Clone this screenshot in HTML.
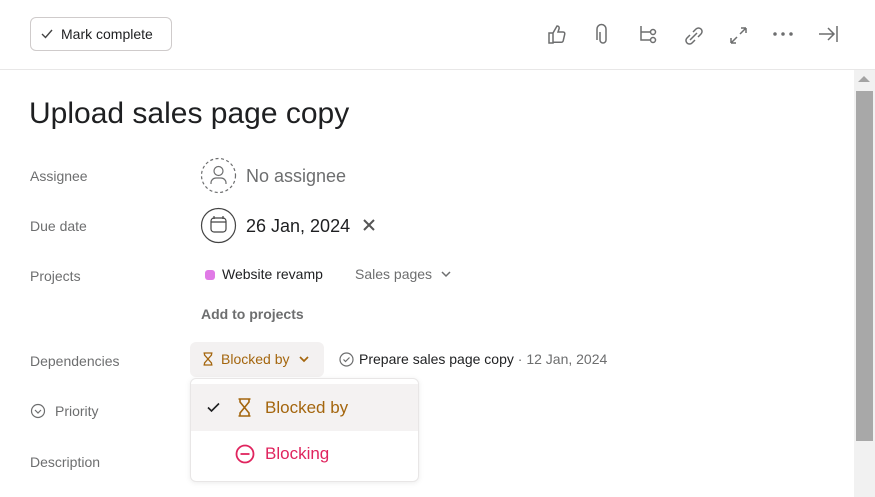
<!DOCTYPE html><html><head><style>
body{margin:0;width:875px;height:497px;overflow:hidden;background:#fff;font-family:"Liberation Sans",sans-serif;position:relative;color:#1e1f21}
.a{position:absolute}
.lbl{position:absolute;left:30px;font-size:14px;color:#6d6e6f}
svg{position:absolute}
</style></head><body>
<div class="a" style="left:30px;top:17px;width:142px;height:34px;border:1px solid #cfcbcb;border-radius:6px;box-sizing:border-box"></div>
<svg style="left:40px;top:28px" width="14" height="12" viewBox="0 0 14 12"><path d="M2 6l3.5 3.5L12 2" fill="none" stroke="#444" stroke-width="1.4"/></svg>
<div class="a" style="left:61px;top:26px;font-size:14px;color:#1e1f21">Mark complete</div>
<svg style="left:540px;top:20px" width="310" height="30" viewBox="0 0 310 30" fill="none" stroke="#6d6e6f" stroke-width="1.5">
<path d="M9 13h4v10H9zM13 13l4-7c2 0 2.5 1.5 2 3l-1 3h5c1.5 0 2 1 1.7 2.3l-1.5 6.5c-.3 1-1 1.5-2 1.5H13"/>
<path d="M60 12v8a3 3 0 0 0 6 0V9a4.5 4.5 0 0 0-9 0v11"/>
<path d="M101 6v14h9M101 12h9"/><circle cx="113" cy="12" r="2.5"/><circle cx="113" cy="20" r="2.5"/>
<path d="M150 15l-3 3a3.5 3.5 0 0 0 5 5l3-3M158 17l3-3a3.5 3.5 0 0 0-5-5l-3 3M150 20l7-7"/>
<path d="M191 23l6-6M191 23v-5M191 23h5M206 8l-6 6M206 8h-5M206 8v5"/>
<circle cx="235" cy="14" r="1" fill="#6d6e6f"/><circle cx="243" cy="14" r="1" fill="#6d6e6f"/><circle cx="251" cy="14" r="1" fill="#6d6e6f"/>
<path d="M279 14h15M288 8l6 6-6 6M297 6v16"/>
</svg>
<div class="a" style="left:0;top:69px;width:875px;height:1px;background:#e8e7e7"></div>
<div class="a" style="left:854px;top:70px;width:21px;height:427px;background:#f1f1f1"></div>
<div class="a" style="left:856px;top:91px;width:17px;height:350px;background:#a8a8a8"></div>
<div class="a" style="left:858px;top:76px;width:0;height:0;border-left:6px solid transparent;border-right:6px solid transparent;border-bottom:6px solid #a3a3a3"></div>
<div class="a" style="left:29px;top:97px;font-size:30px;color:#1e1f21">Upload sales page copy</div>
<div class="lbl" style="top:168px">Assignee</div>
<div class="lbl" style="top:218px">Due date</div>
<div class="lbl" style="top:268px">Projects</div>
<div class="lbl" style="top:353px">Dependencies</div>
<div class="lbl" style="top:403px;left:55px">Priority</div>
<svg style="left:30px;top:403px" width="16" height="16" viewBox="0 0 16 16" fill="none" stroke="#6d6e6f" stroke-width="1.2"><circle cx="8" cy="8" r="6.5"/><path d="M5 7l3 3 3-3"/></svg>
<div class="lbl" style="top:454px">Description</div>
<svg style="left:200px;top:157px" width="37" height="37" viewBox="0 0 37 37" fill="none" stroke="#6d6e6f" stroke-width="1.2"><circle cx="18.5" cy="18.5" r="17" stroke-dasharray="3 2.5"/><circle cx="18.5" cy="14" r="4.5"/><path d="M11 27v-1a5 5 0 0 1 5-5h5a5 5 0 0 1 5 5v1"/></svg>
<div class="a" style="left:246px;top:166px;font-size:18px;color:#6d6e6f">No assignee</div>
<svg style="left:200px;top:207px" width="37" height="37" viewBox="0 0 37 37" fill="none" stroke="#444" stroke-width="1.2"><circle cx="18.5" cy="18.5" r="17"/><rect x="11" y="11" width="15" height="14" rx="3"/><path d="M11 15h15M14 9v3M23 9v3"/></svg>
<div class="a" style="left:246px;top:216px;font-size:18px;color:#1e1f21">26 Jan, 2024</div>
<svg style="left:362px;top:218px" width="14" height="14" viewBox="0 0 14 14" stroke="#555" stroke-width="2"><path d="M2 2l10 10M12 2L2 12"/></svg>
<div class="a" style="left:205px;top:270px;width:10px;height:10px;border-radius:3px;background:#e07ae6"></div>
<div class="a" style="left:222px;top:266px;font-size:14px;color:#1e1f21">Website revamp</div>
<div class="a" style="left:355px;top:266px;font-size:14px;color:#6d6e6f">Sales pages</div>
<svg style="left:440px;top:268px" width="12" height="12" viewBox="0 0 12 12" fill="none" stroke="#6d6e6f" stroke-width="1.5"><path d="M2 4l4 4 4-4"/></svg>
<div class="a" style="left:201px;top:306px;font-size:14px;font-weight:bold;color:#6d6e6f">Add to projects</div>
<div class="a" style="left:190px;top:342px;width:134px;height:35px;border-radius:6px;background:#f3f1f1"></div>
<svg style="left:202px;top:352px" width="12" height="14" viewBox="0 0 12 14" fill="none" stroke="#a4660e" stroke-width="1.3"><path d="M1.5 1h9M1.5 13h9M2.5 1v2l3.5 4-3.5 4v2M9.5 1v2L6 7l3.5 4v2"/></svg>
<div class="a" style="left:221px;top:351px;font-size:14px;color:#a4660e">Blocked by</div>
<svg style="left:298px;top:353px" width="12" height="12" viewBox="0 0 12 12" fill="none" stroke="#a4660e" stroke-width="1.7"><path d="M2 4l4 4 4-4"/></svg>
<svg style="left:339px;top:352px" width="15" height="15" viewBox="0 0 15 15" fill="none" stroke="#6d6e6f" stroke-width="1.2"><circle cx="7.5" cy="7.5" r="6.5"/><path d="M4.5 7.5l2 2 4-4"/></svg>
<div class="a" style="left:359px;top:351px;font-size:14px;color:#1e1f21">Prepare sales page copy <span style="color:#6d6e6f">· 12 Jan, 2024</span></div>
<div class="a" style="left:190px;top:378px;width:229px;height:104px;border:1px solid #e8e6e6;border-radius:6px;background:#fff;box-shadow:0 1px 6px rgba(0,0,0,.08);overflow:hidden;box-sizing:border-box">
<div style="height:47px;background:#f4f2f2;margin-top:5px"></div></div>
<svg style="left:207px;top:402px" width="13" height="11" viewBox="0 0 13 11" fill="none" stroke="#1e1f21" stroke-width="1.6"><path d="M1 5.5l3.5 3.5L12 1.5"/></svg>
<svg style="left:237px;top:398px" width="15" height="19" viewBox="0 0 15 19" fill="none" stroke="#a4660e" stroke-width="1.6"><path d="M1.5 1h12M1.5 18h12M3 1v3l4.5 5.5L3 15v3M12 1v3L7.5 9.5 12 15v3"/></svg>
<div class="a" style="left:265px;top:398px;font-size:17px;color:#a4660e">Blocked by</div>
<svg style="left:235px;top:444px" width="20" height="20" viewBox="0 0 20 20" fill="none" stroke="#e0245e" stroke-width="1.8"><circle cx="10" cy="10" r="8.5"/><path d="M5.5 10h9"/></svg>
<div class="a" style="left:265px;top:444px;font-size:17px;color:#e0245e">Blocking</div>
</body></html>
